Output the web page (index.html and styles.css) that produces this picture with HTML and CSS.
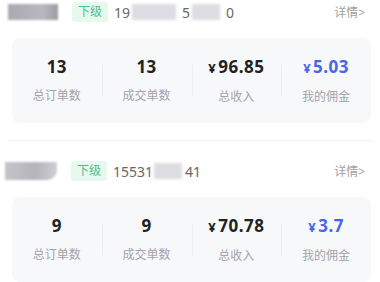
FILE: index.html
```html
<!DOCTYPE html>
<html lang="zh">

<head>
    <meta charset="UTF-8">
    <meta name="viewport" content="width=device-width, initial-scale=1.0">
    <title>下级订单</title>
    <link rel="stylesheet" href="styles.css">
</head>

<body>

    <div class="team-list">
        <!-- 第一个下级 -->
        <div class="team-item">
            <div class="item-head">
                <span class="nick-mask"></span>
                <span class="tag">下级</span>
                <span class="phone">19<span class="mask mask-a"></span>5<span class="mask mask-b"></span>0</span>
                <span class="detail">详情&gt;</span>
            </div>
            <div class="stats">
                <div class="stat">
                    <div class="num">13</div>
                    <div class="label">总订单数</div>
                </div>
                <div class="stat">
                    <div class="num">13</div>
                    <div class="label">成交单数</div>
                </div>
                <div class="stat">
                    <div class="num"><span class="yen">¥</span>96.85</div>
                    <div class="label">总收入</div>
                </div>
                <div class="stat">
                    <div class="num blue"><span class="yen">¥</span>5.03</div>
                    <div class="label">我的佣金</div>
                </div>
            </div>
        </div>

        <!-- 第二个下级 -->
        <div class="team-item">
            <div class="item-head">
                <span class="nick-mask nick-mask-2"></span>
                <span class="tag">下级</span>
                <span class="phone">15531<span class="mask mask-c"></span>41</span>
                <span class="detail">详情&gt;</span>
            </div>
            <div class="stats">
                <div class="stat">
                    <div class="num">9</div>
                    <div class="label">总订单数</div>
                </div>
                <div class="stat">
                    <div class="num">9</div>
                    <div class="label">成交单数</div>
                </div>
                <div class="stat">
                    <div class="num"><span class="yen">¥</span>70.78</div>
                    <div class="label">总收入</div>
                </div>
                <div class="stat">
                    <div class="num blue"><span class="yen">¥</span>3.7</div>
                    <div class="label">我的佣金</div>
                </div>
            </div>
        </div>
    </div>

</body>

</html>
```

FILE: styles.css
```css
body {
    font-family: "Noto Sans", "Noto Sans CJK SC", sans-serif;
    background-color: #ffffff;
    margin: 0;
    overflow: hidden;
}

.team-list {
    margin: -18px 7px 0 8px;
}

.team-item {
    padding: 12px 0 17px 0;
    border-bottom: 1px solid #f0f0f2;
}

.item-head {
    display: flex;
    align-items: center;
    height: 36px;
    margin-bottom: 8px;
}

/* 打码的昵称 */
.nick-mask {
    width: 50px;
    height: 16px;
    background: linear-gradient(90deg, #a9a9b0, #b8b8c0 70%, #9c9ca4);
    filter: blur(1px);
    margin-right: 14px;
}

.nick-mask-2 {
    width: 52px;
    height: 18px;
    margin-left: -3px;
    border-radius: 0 0 10px 0;
    background: linear-gradient(90deg, #c4c4ca, #b4b4bb 60%, #cfcfd4);
}

.tag {
    background-color: #e7f8ef;
    color: #4cc08c;
    font-size: 12px;
    padding: 2px 6px;
    border-radius: 3px;
    line-height: 14px;
    padding: 3px 6px;
}

.phone {
    font-size: 14px;
    color: #666;
    margin-left: 6px;
    display: flex;
    align-items: center;
}

.mask {
    display: inline-block;
    height: 16px;
    background-color: #dcdce2;
    filter: blur(1.5px);
}

.mask-a {
    width: 44px;
    margin: 0 6px 0 2px;
}

.mask-b {
    width: 28px;
    margin: 0 6px 0 2px;
}

.mask-c {
    width: 28px;
    margin: 0 3px 0 1px;
}

.detail {
    margin-left: auto;
    font-size: 12px;
    color: #a0a0a0;
    margin-right: 8px;
}

.stats {
    display: flex;
    align-items: center;
    background-color: #f7f8fa;
    border-radius: 8px;
    height: 85px;
    margin: 0 2px 0 4px;
}

.stat {
    flex: 1;
    text-align: center;
    position: relative;
}

.stat + .stat::before {
    content: "";
    position: absolute;
    left: 0;
    top: 8px;
    bottom: 8px;
    width: 1px;
    background-color: #eceef1;
}

.num {
    font-size: 17px;
    font-weight: bold;
    color: #222;
    line-height: 20px;
    letter-spacing: 0.5px;
}

.yen {
    font-size: 13px;
    margin-right: 2px;
}

.num.blue {
    color: #4a66e8;
}

.label {
    font-size: 12px;
    color: #a3a3a8;
    margin-top: 11px;
    line-height: 16px;
}
```
